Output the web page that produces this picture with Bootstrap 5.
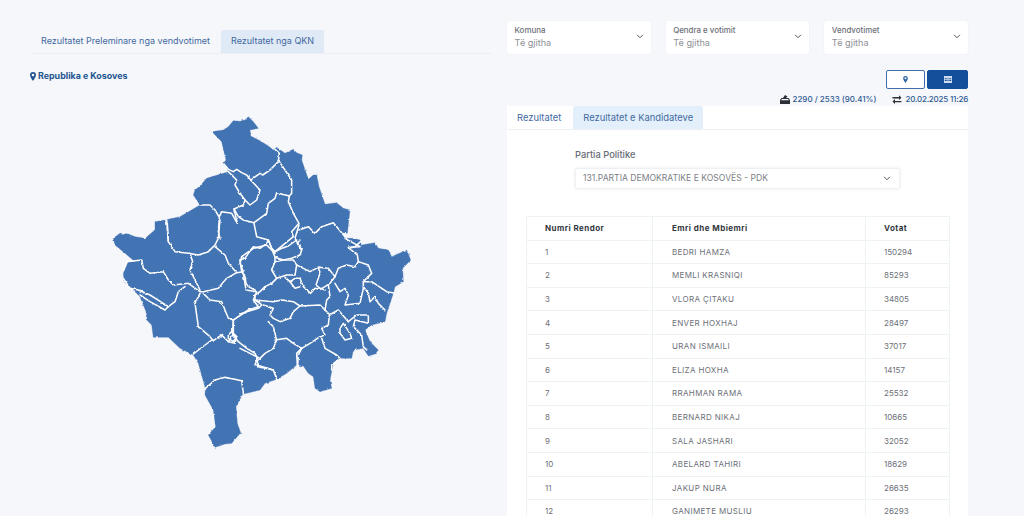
<!DOCTYPE html>
<html lang="sq">
<head>
<meta charset="utf-8">
<title>Rezultatet</title>
<link href="https://cdn.jsdelivr.net/npm/bootstrap@5.3.0/dist/css/bootstrap.min.css" rel="stylesheet">
<style>
html,body{height:516px;overflow:hidden}
body{background:#f5f7fb;font-family:Inter,"Liberation Sans",sans-serif;color:#6f7480}
.page-wrap{padding:21px 56px 0 31px;gap:15px}
.left-side{width:461px;padding-top:9px;flex:none}
.right-side{width:461px;flex:none}
.tabs-a{border-bottom:1px solid #eceff3;--bs-nav-tabs-border-width:0}
.tabs-a .nav-link,.tabs-b .nav-link{font-size:9px;line-height:12px;color:#43699f;padding:5px 10px 6px;border:0;border-radius:2px 2px 0 0;background:none}
.tabs-a .nav-item:first-child .nav-link{padding-right:11px}
.tabs-a .nav-link.active,.tabs-b .nav-link.active{background:#dfeaf6;color:#43699f}
.tabs-b{border-bottom:1px solid #edf0f4;--bs-nav-tabs-border-width:0}
.tabs-b .nav-link{font-size:9.4px;padding:6px 10px 5px;height:23px}
.tabs-b .nav-item:first-child .nav-link{padding-right:12px}
.tabs-b .nav-link.active{background:#e3f0fb}
.region-title{font-size:8.9px;font-weight:700;color:#23548f;margin:16px 0 0 -1px;line-height:12px;gap:2px}
.map-box{display:block;width:320px;height:345px;margin:28px 0 0 69px}
.filter-row{gap:15px}
.filter-box{flex:1;background:#fff;height:33px;border-radius:3px;padding:4px 7.5px;position:relative;box-shadow:0 0 2px rgba(30,50,90,.06)}
.filter-box b{display:block;font-size:7.9px;line-height:10px;font-weight:500;color:#6c6f78}
.filter-box span{display:block;font-size:9.1px;line-height:13px;color:#8e9096;margin-top:1px}
.chev{position:absolute;right:7px;top:13px;width:8px;height:5px}
.btn-row{margin-top:16px;gap:2px}
.map-btn{width:39px;height:19px;padding:0;border:1px solid #3f6ea9;background:#fff;border-radius:2px;display:flex;align-items:center;justify-content:center}
.map-btn.on{width:41px;background:#134f9b;border-color:#134f9b}
.stats{font-size:8px;font-weight:500;color:#2f5a92;line-height:12px;margin-top:4px;gap:16px}
.stats>span{gap:3px}
.stats>span:last-child{letter-spacing:-.2px}
.res-card{margin-top:1px;border:0;border-radius:0;background:#fff;height:500px}
.party-wrap{padding:19px 68px 0}
.party-wrap label{display:block;font-size:9.3px;line-height:12px;color:#666b75;margin-bottom:7px;font-weight:500}
.party-select{height:21px;width:325px;background:#fff;border:1px solid #eef0f4;box-shadow:0 0 3px rgba(30,50,90,.1);border-radius:2px;font-size:8.6px;line-height:19px;color:#7c7f86;padding:0 7px;position:relative}
.party-select .chev{top:7px;right:8px}
.res-table{width:424px;margin:27px 0 0 19px;table-layout:fixed;font-size:8px;--bs-table-border-color:#edf2f4;--bs-table-bg:transparent;color:#6d7078}
.res-table th,.res-table td{padding:0 0 0 18px;height:23.6px;vertical-align:middle;line-height:10px;font-weight:400;color:#6d7078}
.res-table th{font-weight:700;color:#33363d;letter-spacing:.45px}
.res-table td:nth-child(2){letter-spacing:.35px;padding-left:19px}
.res-table th:nth-child(2){padding-left:19px}
.col-a{width:126px}.col-b{width:213px}
</style>
</head>
<body>
<div class="d-flex page-wrap">
  <div class="left-side">
    <ul class="nav nav-tabs tabs-a">
      <li class="nav-item"><a class="nav-link" href="#">Rezultatet Preleminare nga vendvotimet</a></li>
      <li class="nav-item"><a class="nav-link active" href="#">Rezultatet nga QKN</a></li>
    </ul>
    <div class="d-flex align-items-center region-title">
      <svg width="6" height="9" viewBox="0 0 6 9"><path fill="#23548f" fill-rule="evenodd" d="M3 0a3 3 0 0 0-3 3c0 2 3 6 3 6s3-4 3-6a3 3 0 0 0-3-3zm0 1.7a1.3 1.3 0 1 1 0 2.6 1.3 1.3 0 0 1 0-2.6z"/></svg>
      <span>Republika e Kosoves</span>
    </div>
    <svg class="map-box" viewBox="0 0 960 1035" aria-label="Harta e Kosoves">
      <defs><filter id="rough" x="-2%" y="-2%" width="104%" height="104%"><feTurbulence type="fractalNoise" baseFrequency="0.09" numOctaves="2" seed="4"/><feDisplacementMap in="SourceGraphic" scale="7" xChannelSelector="R" yChannelSelector="G"/></filter></defs>
      <g filter="url(#rough)">
      <path fill="#4373b2" stroke="#4373b2" stroke-width="1" stroke-linejoin="round" d="M336 65L370 60 385 50 400 32 420 34 435 30 445 20 460 35 475 55 450 60 452 78 480 92 505 108 520 120 530 112 555 130 580 118 590 128 607 135 605 150 625 208 640 195 650 195 657 230 675 283 710 278 730 295 750 300 742 370 730 368 735 385 760 385 780 390 785 405 825 398 835 415 865 420 875 440 920 420 932 450 908 475 910 515 885 530 880 550 860 610 855 635 815 645 795 660 810 695 835 720 825 732 805 738 790 715 760 720 755 745 720 745 700 760 690 810 695 835 660 845 645 835 640 800 625 790 610 768 590 765 560 790 530 808 495 820 480 840 440 850 428 852 408 890 412 940 422 968 395 1000 375 1002 345 1012 325 975 347 950 340 900 315 855 316 835 295 760 280 735 240 715 205 682 160 682 155 645 138 628 140 610 120 560 95 535 72 515 70 490 85 455 105 455 75 430 45 405 40 385 60 370 85 372 105 380 135 385 165 360 165 335 195 330 240 320 300 285 280 255 285 240 300 228 320 205 370 190 385 185 370 160 378 150 365 95Z"/>
      <g fill="none" stroke="#fff" stroke-width="4.6" stroke-linejoin="round" stroke-linecap="round">
        <path d="M372 162L385 178 400 185 410 178 425 188 440 195 452 210 480 190 488 195 510 180 535 155 538 130 525 118"/>
        <path d="M538 155L575 210 575 250 568 258 565 275 580 310 597 340 575 365 580 380 525 425 515 415 505 390 470 380 462 340"/>
        <path d="M372 170L385 185 410 210 405 225 420 250 435 270 450 285 470 270 480 240 452 210"/>
        <path d="M435 270L430 285 402 297 415 320 430 330 462 338 500 310 505 280 525 265 530 248 568 258"/>
        <path d="M300 285L330 285 345 300 358 322 355 365 360 385"/>
        <path d="M358 320L365 305 395 310 412 340 402 297"/>
        <path d="M197 330L202 340 205 395"/>
        <path d="M597 345L585 385 605 420"/>
        <path d="M597 360L625 350 645 370 665 350 700 338 735 380"/>
        <path d="M735 385L780 410 745 412"/>
        <path d="M335 690L280 732"/>
        <path d="M470 765L520 780 530 808"/>
        <path d="M470 750L465 765"/>
        <path d="M605 715L590 730 592 765"/>
        <path d="M316 835L345 810 375 802 425 812 430 850"/>
        <path d="M400 630L400 675 415 695 440 715 465 730 475 750"/>
        <path d="M385 675L395 665 410 680 400 695 385 685Z"/>
      </g>
      <g transform="translate(420 390)" fill="none" stroke="#fff" stroke-width="4.6" stroke-linejoin="round" stroke-linecap="round">
        <path d="M0 60L15 55 25 40 40 20 60 25 80 10 85 0"/>
        <path d="M85 0L100 38 125 25 145 18 170 0"/>
        <path d="M180 0L172 10 185 30 180 45 155 55 130 60 105 52 100 38"/>
        <path d="M0 60L5 95 15 110 18 130 25 140 45 150"/>
        <path d="M105 52L105 65 95 90 110 115 95 130 75 140 60 155 45 165 45 180 60 190 65 195 55 205 30 212 0 222"/>
        <path d="M105 65L130 60 160 60 170 75 165 105 140 105 110 115"/>
        <path d="M170 75L190 85 210 95 235 82 265 85 285 110 295 85 320 75 345 80 355 65 352 45 328 25 345 20 362 5"/>
        <path d="M285 110L270 130 255 140 240 148 225 145 212 160 190 140 180 115 165 115 150 125 135 112"/>
        <path d="M150 125L165 145 180 140"/>
        <path d="M235 82L240 100 228 135 240 145 255 150"/>
        <path d="M355 65L385 75 395 100 370 125 370 145 360 190 315 195 325 165 315 145 300 155 285 130"/>
        <path d="M370 125L395 125 440 155 465 160"/>
        <path d="M370 140L385 160 390 185 405 170 415 190 435 210"/>
        <path d="M265 135L270 170 260 180 255 210 270 225"/>
        <path d="M45 180L100 185 125 180 160 185 180 198 240 195 255 210"/>
        <path d="M180 198L160 215 150 235 120 245 100 235 90 225 100 205 70 195"/>
        <path d="M85 245L100 260 110 300 100 325 75 340 60 355 0 325"/>
        <path d="M105 300L140 295 160 310 185 325 210 310 240 290 255 285 245 265 265 255 268 225 295 210 325 245"/>
        <path d="M185 325L175 345 172 390"/>
        <path d="M245 295L255 325 290 345 300 355 275 375 275 390"/>
        <path d="M50 355L55 380 100 390"/>
        <path d="M325 245L350 225 385 225 385 250 345 240 340 260 365 285 370 320 380 330"/>
        <path d="M300 265L310 250 330 280 335 295 315 300 300 280Z"/>
      </g>
      <g transform="translate(30 330)" fill="none" stroke="#fff" stroke-width="4.6" stroke-linejoin="round" stroke-linecap="round">
        <path d="M170 0L175 65 195 95 235 100 265 105 295 95 315 75 325 55 330 0"/>
        <path d="M315 80L345 105 355 130 380 158 400 155 390 130 395 110 430 85 470 75 495 100"/>
        <path d="M240 100L248 125 240 150 270 210"/>
        <path d="M380 158L350 175 325 205 280 215 270 215 235 190 190 195 175 180 160 155 120 160 100 145 95 120 50 125 40 150"/>
        <path d="M40 175L60 205 85 210 120 225 160 250 175 260 165 270 120 245 90 225"/>
        <path d="M175 260L195 245 205 215 225 200"/>
        <path d="M270 220L255 250 265 320 300 350 310 362"/>
        <path d="M280 220L300 240 335 245 355 295 370 300 415 270 445 260 430 240 440 215 408 210 400 160"/>
        <path d="M370 300L368 345 355 365 375 370 380 350 368 345"/>
        <path d="M310 362L335 345 355 365"/>
      </g>
      </g>
    </svg>
  </div>
  <div class="right-side">
    <div class="d-flex filter-row">
      <div class="filter-box"><b>Komuna</b><span>Të gjitha</span><svg class="chev" viewBox="0 0 9 6"><path d="M1 1l3.5 3.5L8 1" fill="none" stroke="#555" stroke-width="1.2"/></svg></div>
      <div class="filter-box"><b>Qendra e votimit</b><span>Të gjitha</span><svg class="chev" viewBox="0 0 9 6"><path d="M1 1l3.5 3.5L8 1" fill="none" stroke="#555" stroke-width="1.2"/></svg></div>
      <div class="filter-box"><b>Vendvotimet</b><span>Të gjitha</span><svg class="chev" viewBox="0 0 9 6"><path d="M1 1l3.5 3.5L8 1" fill="none" stroke="#555" stroke-width="1.2"/></svg></div>
    </div>
    <div class="d-flex justify-content-end btn-row">
      <button class="map-btn" type="button" aria-label="Harta"><svg width="5" height="7" viewBox="0 0 6 9"><path fill="#2a62a8" fill-rule="evenodd" d="M3 0a3 3 0 0 0-3 3c0 2 3 6 3 6s3-4 3-6a3 3 0 0 0-3-3zm0 1.7a1.3 1.3 0 1 1 0 2.6 1.3 1.3 0 0 1 0-2.6z"/></svg></button>
      <button class="map-btn on" type="button" aria-label="Tabela"><svg width="8" height="7" viewBox="0 0 8 7"><path fill="#cfdcee" fill-rule="evenodd" d="M0 0h8v7H0zM.8 2.2v1.1h1.9V2.2zm2.6 0v1.1h1.2V2.2zm1.9 0v1.1h1.9V2.2zM.8 4v1.1h1.9V4zm2.6 0v1.1h1.2V4zm1.9 0v1.1h1.9V4z"/></svg></button>
    </div>
    <div class="d-flex justify-content-end stats">
      <span class="d-flex align-items-center"><svg width="10" height="10" viewBox="0 0 10 10"><path fill="#2b2f36" d="M0 10V6l1.5-2H3l2-3 2.5 1.5L6 4h2.5L10 6v4zM1 6.3h8L8 5H2z"/></svg>2290 / 2533 (90.41%)</span>
      <span class="d-flex align-items-center"><svg width="10" height="9" viewBox="0 0 9 9"><path fill="#2b2f36" d="M0 2h6.5V.3L9 2.7 6.5 5V3.4H0zM9 6H2.5V4L0 6.5 2.5 9V7.3H9z"/></svg>20.02.2025 11:26</span>
    </div>
    <div class="card res-card">
      <ul class="nav nav-tabs tabs-b">
        <li class="nav-item"><a class="nav-link" href="#">Rezultatet</a></li>
        <li class="nav-item"><a class="nav-link active" href="#">Rezultatet e Kandidateve</a></li>
      </ul>
      <div class="party-wrap">
        <label>Partia Politike</label>
        <div class="party-select">131.PARTIA DEMOKRATIKE E KOSOVËS - PDK<svg class="chev" viewBox="0 0 9 6"><path d="M1 1l3.5 3.5L8 1" fill="none" stroke="#555" stroke-width="1.2"/></svg></div>
      </div>
      <table class="table table-bordered res-table">
        <thead><tr><th class="col-a">Numri Rendor</th><th class="col-b">Emri dhe Mbiemri</th><th>Votat</th></tr></thead>
        <tbody>
          <tr><td>1</td><td>BEDRI HAMZA</td><td>150294</td></tr>
          <tr><td>2</td><td>MEMLI KRASNIQI</td><td>85293</td></tr>
          <tr><td>3</td><td>VLORA ÇITAKU</td><td>34805</td></tr>
          <tr><td>4</td><td>ENVER HOXHAJ</td><td>28497</td></tr>
          <tr><td>5</td><td>URAN ISMAILI</td><td>37017</td></tr>
          <tr><td>6</td><td>ELIZA HOXHA</td><td>14157</td></tr>
          <tr><td>7</td><td>RRAHMAN RAMA</td><td>25532</td></tr>
          <tr><td>8</td><td>BERNARD NIKAJ</td><td>10665</td></tr>
          <tr><td>9</td><td>SALA JASHARI</td><td>32052</td></tr>
          <tr><td>10</td><td>ABELARD TAHIRI</td><td>18629</td></tr>
          <tr><td>11</td><td>JAKUP NURA</td><td>26635</td></tr>
          <tr><td>12</td><td>GANIMETE MUSLIU</td><td>26293</td></tr>
        </tbody>
      </table>
    </div>
  </div>
</div>
<script src="https://cdn.jsdelivr.net/npm/bootstrap@5.3.0/dist/js/bootstrap.bundle.min.js"></script>
</body>
</html>
